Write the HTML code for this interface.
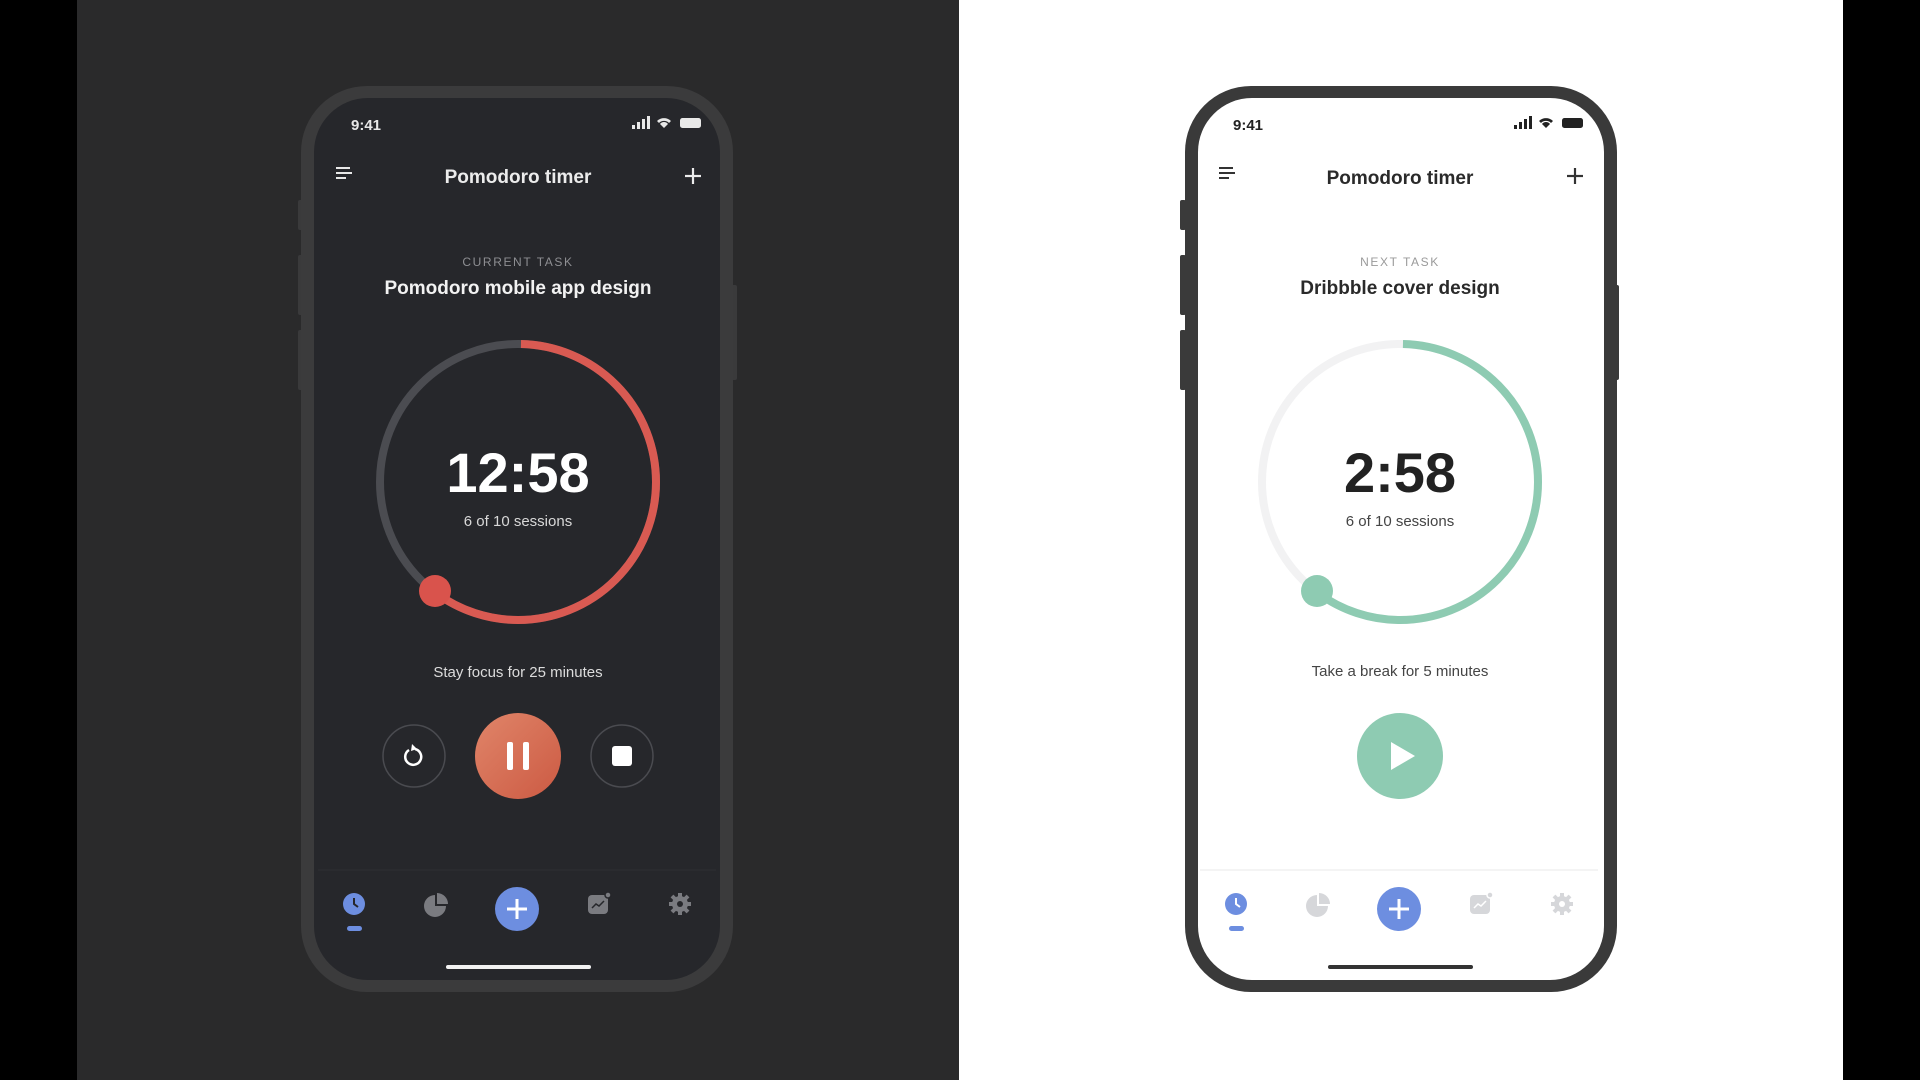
<!DOCTYPE html>
<html><head><meta charset="utf-8"><style>
html,body{margin:0;padding:0;background:#000;}
svg{display:block}
text{font-family:"Liberation Sans",sans-serif}
</style></head><body>
<svg width="1920" height="1080" viewBox="0 0 1920 1080" xmlns="http://www.w3.org/2000/svg">
<rect width="1920" height="1080" fill="#000"/>
<rect x="77" y="0" width="882" height="1080" fill="#2a2a2b"/>
<rect x="959" y="0" width="884" height="1080" fill="#ffffff"/>

<!-- DARK PHONE -->
<g>
<rect x="298" y="200" width="6" height="30" rx="2" fill="#3a3a3b"/>
<rect x="298" y="255" width="6" height="60" rx="2" fill="#3a3a3b"/>
<rect x="298" y="330" width="6" height="60" rx="2" fill="#3a3a3b"/>
<rect x="731" y="285" width="6" height="95" rx="2" fill="#3a3a3b"/>
<rect x="301" y="86" width="432" height="906" rx="66" fill="#3b3b3c"/>
<rect x="314" y="98" width="406" height="882" rx="54" fill="#26272b"/>
<text x="351" y="130" font-size="15" font-weight="bold" fill="#e8e8e8">9:41</text>
<g fill="#e8e8e8"><rect x="632" y="125" width="3" height="4"/><rect x="637" y="122" width="3" height="7"/><rect x="642" y="119" width="3" height="10"/><rect x="647" y="116" width="3" height="13"/>
<path d="M657 121 a10 10 0 0 1 14 0 l-2 2 a7 7 0 0 0 -10 0z M660 124 a5 5 0 0 1 8 0 l-4 4z"/>
<rect x="680" y="118" width="21" height="10" rx="2.5"/></g>
<g stroke="#e8e8e8" stroke-width="2"><line x1="336" y1="168" x2="350" y2="168"/><line x1="336" y1="173" x2="352" y2="173"/><line x1="336" y1="178" x2="346" y2="178"/></g>
<text x="518" y="183" font-size="19" font-weight="bold" fill="#ececec" text-anchor="middle">Pomodoro timer</text>
<g stroke="#ececec" stroke-width="2.2"><line x1="693" y1="168" x2="693" y2="184"/><line x1="685" y1="176" x2="701" y2="176"/></g>
<text x="518" y="266" font-size="12" fill="#8e8f93" text-anchor="middle" letter-spacing="1.6">CURRENT TASK</text>
<text x="518" y="294" font-size="19" font-weight="bold" fill="#f2f2f2" text-anchor="middle">Pomodoro mobile app design</text>
<circle cx="518" cy="482" r="138" fill="none" stroke="#4b4c51" stroke-width="8"/>
<circle cx="518" cy="482" r="138" fill="none" stroke="#d95a52" stroke-width="8" stroke-dasharray="518 400" stroke-dashoffset="-3" transform="rotate(-90 518 482)"/>
<circle cx="435" cy="591" r="16" fill="#d9534c"/>
<text x="518" y="492" font-size="56" font-weight="bold" fill="#ffffff" text-anchor="middle">12:58</text>
<text x="518" y="526" font-size="15" fill="#d8d8d8" text-anchor="middle">6 of 10 sessions</text>
<text x="518" y="677" font-size="15" fill="#dcdcdc" text-anchor="middle">Stay focus for 25 minutes</text>
<circle cx="414" cy="756" r="31" fill="none" stroke="#4a4b50" stroke-width="1.5"/>
<path d="M409 750 a8 8 0 1 0 6 -1" fill="none" stroke="#fff" stroke-width="2.5"/>
<path d="M412 744 l5 5 -6 2z" fill="#fff"/>
<defs><linearGradient id="pg" x1="0" y1="0" x2="1" y2="1"><stop offset="0" stop-color="#e08569"/><stop offset="1" stop-color="#cc5a43"/></linearGradient></defs>
<circle cx="518" cy="756" r="43" fill="url(#pg)"/>
<rect x="507" y="742" width="6" height="28" rx="2" fill="#fff"/><rect x="523" y="742" width="6" height="28" rx="2" fill="#fff"/>
<circle cx="622" cy="756" r="31" fill="none" stroke="#4a4b50" stroke-width="1.5"/>
<rect x="612" y="746" width="20" height="20" rx="3" fill="#fff"/>
<line x1="318" y1="870" x2="716" y2="870" stroke="#2e2f33" stroke-width="1"/>
<circle cx="354" cy="904" r="11" fill="#6d8ee0"/><path d="M354 898 v6 l4 3" stroke="#26272b" stroke-width="2" fill="none"/>
<rect x="347" y="926" width="15" height="5" rx="2.5" fill="#6d8ee0"/>
<path d="M435 895 a11 11 0 1 0 11 11 h-11z" fill="#7a7b80"/><path d="M437 893 a11 11 0 0 1 11 11 h-11z" fill="#7a7b80"/>
<circle cx="517" cy="909" r="22" fill="#6d8ee0"/>
<g stroke="#fff" stroke-width="3"><line x1="517" y1="899" x2="517" y2="919"/><line x1="507" y1="909" x2="527" y2="909"/></g>
<rect x="588" y="895" width="20" height="19" rx="4" fill="#7a7b80"/><path d="M592 908 l4 -4 3 2 5 -5" stroke="#26272b" stroke-width="1.5" fill="none"/><circle cx="608" cy="895" r="3" fill="#7a7b80" stroke="#26272b" stroke-width="1.5"/>
<g fill="#7a7b80"><circle cx="680" cy="904" r="8"/><g stroke="#7a7b80" stroke-width="4"><line x1="680" y1="893" x2="680" y2="915"/><line x1="669" y1="904" x2="691" y2="904"/><line x1="672" y1="896" x2="688" y2="912"/><line x1="688" y1="896" x2="672" y2="912"/></g><circle cx="680" cy="904" r="3" fill="#26272b"/></g>
<rect x="446" y="965" width="145" height="4" rx="2" fill="#f2f2f2"/>
</g>

<!-- LIGHT PHONE -->
<g transform="translate(882,0)">
<rect x="298" y="200" width="6" height="30" rx="2" fill="#3a3a3a"/>
<rect x="298" y="255" width="6" height="60" rx="2" fill="#3a3a3a"/>
<rect x="298" y="330" width="6" height="60" rx="2" fill="#3a3a3a"/>
<rect x="731" y="285" width="6" height="95" rx="2" fill="#3a3a3a"/>
<rect x="303" y="86" width="432" height="906" rx="66" fill="#3a3a3a"/>
<rect x="316" y="98" width="406" height="882" rx="54" fill="#ffffff"/>
<text x="351" y="130" font-size="15" font-weight="bold" fill="#222">9:41</text>
<g fill="#222"><rect x="632" y="125" width="3" height="4"/><rect x="637" y="122" width="3" height="7"/><rect x="642" y="119" width="3" height="10"/><rect x="647" y="116" width="3" height="13"/>
<path d="M657 121 a10 10 0 0 1 14 0 l-2 2 a7 7 0 0 0 -10 0z M660 124 a5 5 0 0 1 8 0 l-4 4z"/>
<rect x="680" y="118" width="21" height="10" rx="2.5"/></g>
<g stroke="#333" stroke-width="2"><line x1="337" y1="168" x2="351" y2="168"/><line x1="337" y1="173" x2="353" y2="173"/><line x1="337" y1="178" x2="347" y2="178"/></g>
<text x="518" y="184" font-size="19" font-weight="bold" fill="#2a2a2a" text-anchor="middle">Pomodoro timer</text>
<g stroke="#333" stroke-width="2.2"><line x1="693" y1="168" x2="693" y2="184"/><line x1="685" y1="176" x2="701" y2="176"/></g>
<text x="518" y="266" font-size="12" fill="#9a9a9a" text-anchor="middle" letter-spacing="1.6">NEXT TASK</text>
<text x="518" y="294" font-size="19" font-weight="bold" fill="#2a2a2a" text-anchor="middle">Dribbble cover design</text>
<circle cx="518" cy="482" r="138" fill="none" stroke="#f2f2f3" stroke-width="8"/>
<circle cx="518" cy="482" r="138" fill="none" stroke="#8ecbb2" stroke-width="8" stroke-dasharray="518 400" stroke-dashoffset="-3" transform="rotate(-90 518 482)"/>
<circle cx="435" cy="591" r="16" fill="#8ecbb2"/>
<text x="518" y="492" font-size="56" font-weight="bold" fill="#222" text-anchor="middle">2:58</text>
<text x="518" y="526" font-size="15" fill="#444" text-anchor="middle">6 of 10 sessions</text>
<text x="518" y="676" font-size="15" fill="#444" text-anchor="middle">Take a break for 5 minutes</text>
<circle cx="518" cy="756" r="43" fill="#8ecbb2"/>
<path d="M509 742 l24 14 -24 14z" fill="#fff"/>
<line x1="318" y1="870" x2="716" y2="870" stroke="#f0f0f0" stroke-width="1.5"/>
<circle cx="354" cy="904" r="11" fill="#6d8ee0"/><path d="M354 898 v6 l4 3" stroke="#fff" stroke-width="2" fill="none"/>
<rect x="347" y="926" width="15" height="5" rx="2.5" fill="#6d8ee0"/>
<path d="M435 895 a11 11 0 1 0 11 11 h-11z" fill="#d6d7da"/><path d="M437 893 a11 11 0 0 1 11 11 h-11z" fill="#d6d7da"/>
<circle cx="517" cy="909" r="22" fill="#6d8ee0"/>
<g stroke="#fff" stroke-width="3"><line x1="517" y1="899" x2="517" y2="919"/><line x1="507" y1="909" x2="527" y2="909"/></g>
<rect x="588" y="895" width="20" height="19" rx="4" fill="#d6d7da"/><path d="M592 908 l4 -4 3 2 5 -5" stroke="#fff" stroke-width="1.5" fill="none"/><circle cx="608" cy="895" r="3" fill="#d6d7da" stroke="#fff" stroke-width="1.5"/>
<g fill="#d6d7da"><circle cx="680" cy="904" r="8"/><g stroke="#d6d7da" stroke-width="4"><line x1="680" y1="893" x2="680" y2="915"/><line x1="669" y1="904" x2="691" y2="904"/><line x1="672" y1="896" x2="688" y2="912"/><line x1="688" y1="896" x2="672" y2="912"/></g><circle cx="680" cy="904" r="3" fill="#fff"/></g>
<rect x="446" y="965" width="145" height="4" rx="2" fill="#333"/>
</g>
</svg>
</body></html>
